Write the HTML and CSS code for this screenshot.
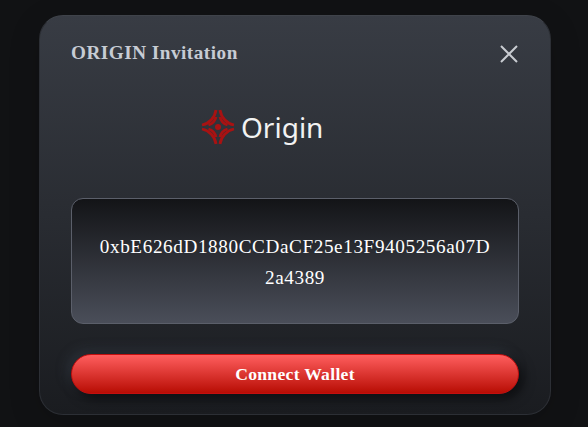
FILE: index.html
```html
<!DOCTYPE html>
<html lang="en">
<head>
<meta charset="utf-8">
<title>ORIGIN Invitation</title>
<link rel="stylesheet" href="styles.css">
</head>
<body>
<main class="modal">
  <header class="modal-head">
    <h2 class="modal-title">ORIGIN Invitation</h2>
    <button class="close" aria-label="Close">
      <svg width="20" height="20" viewBox="0 0 20 20"><path d="M2 2 18 18M18 2 2 18" stroke="#c9ccd1" stroke-width="2" fill="none"/></svg>
    </button>
  </header>
  <div class="logo">
    <svg class="logo-mark" width="34" height="36" viewBox="0 0 34 36" fill="none" stroke="#a81212" stroke-width="2.8">
      <path d="M19 1A18 18 0 0 0 33 16"/>
      <path d="M19 8A11 11 0 0 0 26.500 16"/>
      <path d="M15 1A18 18 0 0 1 1 16"/>
      <path d="M15 8A11 11 0 0 1 7.500 16"/>
      <path d="M19 35A18 18 0 0 1 33 20"/>
      <path d="M19 28A11 11 0 0 1 26.500 20"/>
      <path d="M15 35A18 18 0 0 0 1 20"/>
      <path d="M15 28A11 11 0 0 0 7.500 20"/>
      <circle cx="17" cy="18" r="3" fill="#a81212" stroke="none"/>
    </svg>
    <span class="logo-text">Origin</span>
  </div>
  <div class="address">0xbE626dD1880CCDaCF25e13F9405256a07D2a4389</div>
  <button class="connect">Connect Wallet</button>
</main>
</body>
</html>
```
FILE: styles.css
```css
* { box-sizing: border-box; }
html, body { height: 100%; }
body {
  margin: 0;
  padding: 3px 0 0 2px;
  background: #111214;
  display: flex;
  align-items: center;
  justify-content: center;
  font-family: "Liberation Serif", serif;
}
.modal {
  width: 512px;
  height: 400px;
  padding: 24px 31px 20px;
  border: 1px solid #2c2f35;
  border-top-color: #3f434a;
  border-radius: 24px;
  background: linear-gradient(180deg, #383c44 0%, #1a1c20 100%);
  box-shadow: 0 8px 32px rgba(0,0,0,.15);
  display: flex;
  flex-direction: column;
}
.modal-head {
  display: flex;
  justify-content: space-between;
  align-items: center;
  height: 28px;
}
.modal-title {
  margin: 0 0 2px;
  font-size: 19.2px;
  letter-spacing: .5px;
  font-weight: 700;
  color: #c7ccd4;
}
.close {
  padding: 0;
  background: none;
  border: 0;
  display: flex;
}
.logo {
  margin-top: 37px;
  padding-left: 130px;
  height: 44px;
  display: flex;
  align-items: center;
  gap: 6px;
}
.logo-text {
  font-family: "Noto Sans", sans-serif;
  font-size: 28px;
  color: #f2f2f2;
}
.address {
  margin-top: 49px;
  height: 126px;
  padding: 2px 24px 0;
  border: 1px solid #5b5f6a;
  border-radius: 12px;
  background: linear-gradient(180deg, #131417 0%, #4a4e59 100%);
  display: flex;
  align-items: center;
  justify-content: center;
  text-align: center;
  color: #fff;
  font-size: 19.2px;
  letter-spacing: .6px;
  line-height: 31px;
  word-break: break-all;
}
.connect {
  margin-top: 30px;
  height: 40px;
  border: 1px solid #c40f0f;
  border-radius: 20px;
  background: linear-gradient(180deg, #ff5e5e 0%, #b80d04 100%);
  box-shadow: 4px 4px 12px rgba(0,0,0,.6), -4px -4px 12px rgba(70,80,95,.35);
  color: #fff;
  font-family: "Liberation Serif", serif;
  font-size: 17.6px;
  letter-spacing: .3px;
  font-weight: 700;
}
```
